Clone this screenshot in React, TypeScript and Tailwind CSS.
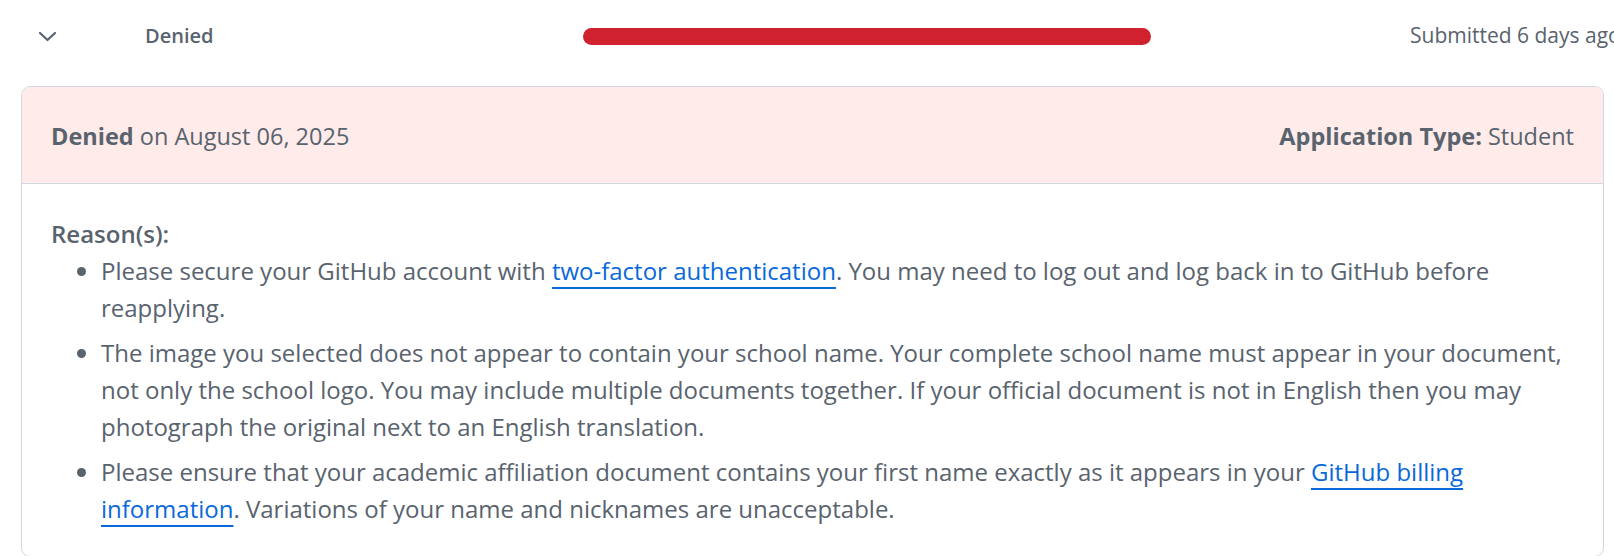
import React from 'react'

const reasons = [
  <>
    Please secure your GitHub account with{' '}
    <a href="#" className="text-[#0969da] underline decoration-[2px] underline-offset-[7px]">
      two-factor authentication
    </a>
    . You may need to log out and log back in to GitHub before reapplying.
  </>,
  <>
    The image you selected does not appear to contain your school name. Your complete school name must
    appear in your document, not only the school logo. You may include multiple documents together. If
    your official document is not in English then you may photograph the original next to an English
    translation.
  </>,
  <>
    Please ensure that your academic affiliation document contains your first name exactly as it appears
    in your{' '}
    <a href="#" className="text-[#0969da] underline decoration-[2px] underline-offset-[7px]">
      GitHub billing information
    </a>
    . Variations of your name and nicknames are unacceptable.
  </>,
]

const App: React.FC = () => {
  return (
    <div
      className="w-[1614px] h-[556px] overflow-hidden bg-white text-[#59636e]"
      style={{ fontFamily: '"Open Sans", "Noto Sans", sans-serif' }}
    >
      {/* summary row */}
      <div className="flex items-center h-[72px] whitespace-nowrap">
        <div className="w-[145px] shrink-0 pl-[38px] flex items-center">
          <svg width="19" height="11" viewBox="0 0 19 11" fill="none">
            <path d="M2 2l7.5 7 7.5-7" stroke="#59636e" strokeWidth="2.2" strokeLinecap="round" strokeLinejoin="round" />
          </svg>
        </div>
        <div className="w-[438px] shrink-0 text-[20px] font-semibold">Denied</div>
        <div className="w-[568px] shrink-0 h-[17px] rounded-full bg-[#cf222e]" />
        <div className="w-[259px] shrink-0" />
        <div className="shrink-0 text-[21px]">Submitted 6 days ago</div>
      </div>

      {/* details card */}
      <div className="mt-[14px] ml-[21px] w-[1583px] border border-[#d1d9e0] rounded-[9px] overflow-hidden">
        <div className="h-[97px] pt-[4px] bg-[#ffebe9] border-b border-[#d1d9e0] px-[29px] flex items-center justify-between text-[23.5px]">
          <div>
            <span className="font-bold">Denied</span> on August 06, 2025
          </div>
          <div>
            <span className="font-bold">Application Type:</span> Student
          </div>
        </div>
        <div className="px-[29px] pt-[31px] pb-[29px] text-[24px] leading-[37px]">
          <div className="font-semibold">Reason(s):</div>
          <ul className="list-disc pl-[50px] flex flex-col gap-[8px]">
            {reasons.map((r, i) => (
              <li key={i}>{r}</li>
            ))}
          </ul>
        </div>
      </div>
    </div>
  )
}

export default App
